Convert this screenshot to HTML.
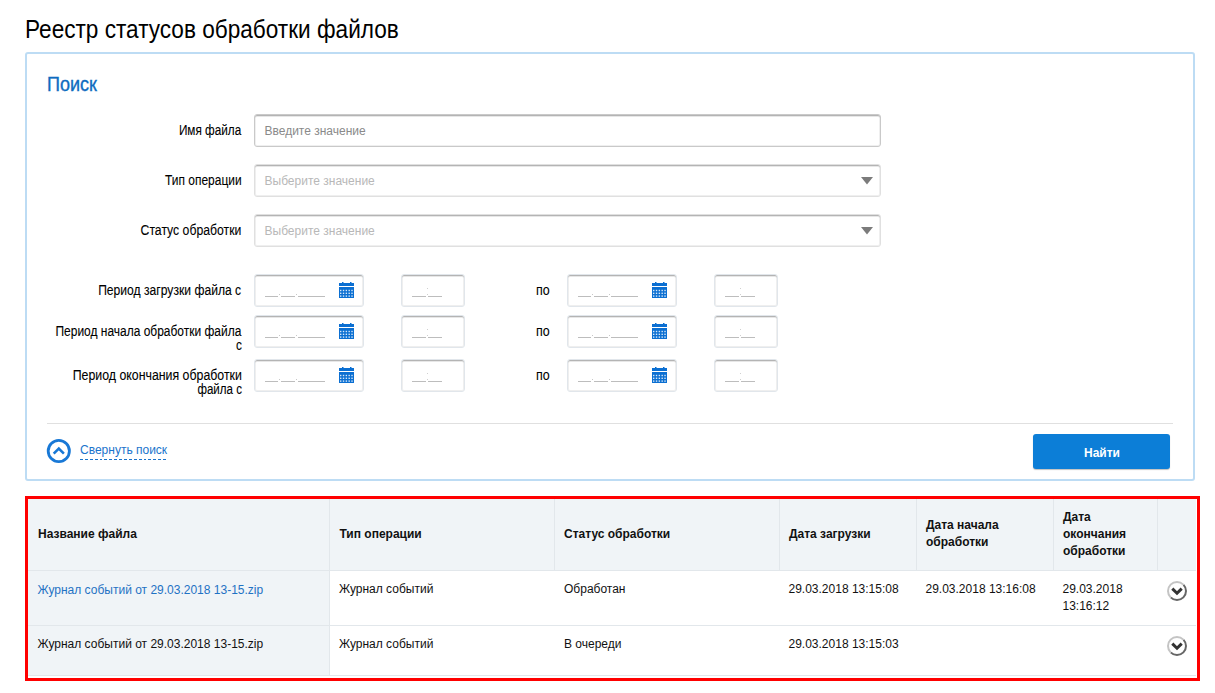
<!DOCTYPE html>
<html><head><meta charset="utf-8"><title>Реестр статусов обработки файлов</title><style>
html,body{margin:0;padding:0}
body{width:1215px;height:693px;overflow:hidden;background:#fff;font-family:"Liberation Sans", sans-serif;position:relative}
.t{position:absolute;white-space:nowrap}
</style></head><body>
<div class="t" style="left:24.5px;top:13.5px;font-size:26px;line-height:30px;color:#000;transform:scaleX(0.869);transform-origin:0 0;">Реестр статусов обработки файлов</div>
<div style="position:absolute;left:25px;top:52px;width:1170px;height:429px;box-sizing:border-box;border:2px solid #bddcf4;border-radius:3px;background:#fff"></div>
<div class="t" style="left:46.5px;top:73px;font-size:20px;line-height:22px;color:#0e6cbf;transform:scaleX(0.9);transform-origin:0 0;-webkit-text-stroke:0.35px #0e6cbf;">Поиск</div>
<div class="t" style="right:973.5px;top:122px;font-size:14px;line-height:16px;color:#000;transform:scaleX(0.84);transform-origin:100% 0;-webkit-text-stroke:0.1px #000;">Имя файла</div>
<div class="t" style="right:973.5px;top:172px;font-size:14px;line-height:16px;color:#000;transform:scaleX(0.854);transform-origin:100% 0;-webkit-text-stroke:0.1px #000;">Тип операции</div>
<div class="t" style="right:973.5px;top:222px;font-size:14px;line-height:16px;color:#000;transform:scaleX(0.874);transform-origin:100% 0;-webkit-text-stroke:0.1px #000;">Статус обработки</div>
<div class="t" style="right:973.5px;top:282px;font-size:14px;line-height:16px;color:#000;transform:scaleX(0.866);transform-origin:100% 0;-webkit-text-stroke:0.1px #000;">Период загрузки файла с</div>
<div class="t" style="right:973.5px;top:323px;font-size:14px;line-height:16px;color:#000;transform:scaleX(0.855);transform-origin:100% 0;-webkit-text-stroke:0.1px #000;">Период начала обработки файла</div>
<div class="t" style="right:973.5px;top:337px;font-size:14px;line-height:16px;color:#000;transform:scaleX(0.85);transform-origin:100% 0;-webkit-text-stroke:0.1px #000;">с</div>
<div class="t" style="right:973.5px;top:367px;font-size:14px;line-height:16px;color:#000;transform:scaleX(0.882);transform-origin:100% 0;-webkit-text-stroke:0.1px #000;">Период окончания обработки</div>
<div class="t" style="right:973.5px;top:381px;font-size:14px;line-height:16px;color:#000;transform:scaleX(0.825);transform-origin:100% 0;-webkit-text-stroke:0.1px #000;">файла с</div>
<div style="position:absolute;left:254px;top:114px;width:627px;height:33px;box-sizing:border-box;background:#fff;border:1px solid #c9c9c9;border-radius:3px;box-shadow:inset 0 1px 0 #b4b4b4,inset 0 0 0 1px #efefef,inset 0 2px 0 #e7e7e7"></div>
<div style="position:absolute;left:254px;top:164px;width:627px;height:33px;box-sizing:border-box;background:#fff;border:1px solid #e0e0e0;border-radius:3px;box-shadow:inset 0 1px 0 #b4b4b4,inset 0 0 0 1px #efefef,inset 0 2px 0 #e7e7e7"></div>
<div style="position:absolute;left:254px;top:214px;width:627px;height:33px;box-sizing:border-box;background:#fff;border:1px solid #e0e0e0;border-radius:3px;box-shadow:inset 0 1px 0 #b4b4b4,inset 0 0 0 1px #efefef,inset 0 2px 0 #e7e7e7"></div>
<div class="t" style="left:264.5px;top:124px;font-size:12px;line-height:14px;color:#8a8a8a;">Введите значение</div>
<div class="t" style="left:264.5px;top:174px;font-size:12px;line-height:14px;color:#b8b8b8;">Выберите значение</div>
<div class="t" style="left:264.5px;top:224px;font-size:12px;line-height:14px;color:#b8b8b8;">Выберите значение</div>
<svg style="position:absolute;left:861px;top:177px" width="12" height="8"><path d="M0 0H12L6 7.5Z" fill="#7b7b7b"/></svg>
<svg style="position:absolute;left:861px;top:227px" width="12" height="8"><path d="M0 0H12L6 7.5Z" fill="#7b7b7b"/></svg>
<div style="position:absolute;left:254px;top:274px;width:110px;height:33px;box-sizing:border-box;background:#fff;border:1px solid #e1e6eb;border-radius:3px;box-shadow:inset 0 1px 0 #b4b4b4,inset 0 0 0 1px #efefef,inset 0 2px 0 #e7e7e7"></div>
<div style="position:absolute;left:401px;top:274px;width:64px;height:33px;box-sizing:border-box;background:#fff;border:1px solid #e1e6eb;border-radius:3px;box-shadow:inset 0 1px 0 #b4b4b4,inset 0 0 0 1px #efefef,inset 0 2px 0 #e7e7e7"></div>
<div style="position:absolute;left:567px;top:274px;width:110px;height:33px;box-sizing:border-box;background:#fff;border:1px solid #e1e6eb;border-radius:3px;box-shadow:inset 0 1px 0 #b4b4b4,inset 0 0 0 1px #efefef,inset 0 2px 0 #e7e7e7"></div>
<div style="position:absolute;left:714px;top:274px;width:64px;height:33px;box-sizing:border-box;background:#fff;border:1px solid #e1e6eb;border-radius:3px;box-shadow:inset 0 1px 0 #b4b4b4,inset 0 0 0 1px #efefef,inset 0 2px 0 #e7e7e7"></div>
<svg style="position:absolute;left:339px;top:282px" width="15" height="16" viewBox="0 0 15 16"><rect x="3" y="0" width="1.5" height="2" fill="#0b6fd2"/><rect x="11" y="0" width="1.5" height="2" fill="#0b6fd2"/><rect x="0" y="1" width="15" height="3" fill="#0b6fd2"/><rect x="0" y="5" width="15" height="11" fill="#0b6fd2"/><rect x="1.00" y="7.80" width="1.4" height="1.4" fill="#d8e8f8"/><rect x="3.83" y="7.80" width="1.4" height="1.4" fill="#d8e8f8"/><rect x="6.66" y="7.80" width="1.4" height="1.4" fill="#d8e8f8"/><rect x="9.49" y="7.80" width="1.4" height="1.4" fill="#d8e8f8"/><rect x="12.32" y="7.80" width="1.4" height="1.4" fill="#d8e8f8"/><rect x="1.00" y="10.60" width="1.4" height="1.4" fill="#d8e8f8"/><rect x="3.83" y="10.60" width="1.4" height="1.4" fill="#d8e8f8"/><rect x="6.66" y="10.60" width="1.4" height="1.4" fill="#d8e8f8"/><rect x="9.49" y="10.60" width="1.4" height="1.4" fill="#d8e8f8"/><rect x="12.32" y="10.60" width="1.4" height="1.4" fill="#d8e8f8"/><rect x="1.00" y="13.40" width="1.4" height="1.4" fill="#d8e8f8"/><rect x="3.83" y="13.40" width="1.4" height="1.4" fill="#d8e8f8"/><rect x="6.66" y="13.40" width="1.4" height="1.4" fill="#d8e8f8"/><rect x="9.49" y="13.40" width="1.4" height="1.4" fill="#d8e8f8"/><rect x="12.32" y="13.40" width="1.4" height="1.4" fill="#d8e8f8"/></svg>
<svg style="position:absolute;left:652px;top:282px" width="15" height="16" viewBox="0 0 15 16"><rect x="3" y="0" width="1.5" height="2" fill="#0b6fd2"/><rect x="11" y="0" width="1.5" height="2" fill="#0b6fd2"/><rect x="0" y="1" width="15" height="3" fill="#0b6fd2"/><rect x="0" y="5" width="15" height="11" fill="#0b6fd2"/><rect x="1.00" y="7.80" width="1.4" height="1.4" fill="#d8e8f8"/><rect x="3.83" y="7.80" width="1.4" height="1.4" fill="#d8e8f8"/><rect x="6.66" y="7.80" width="1.4" height="1.4" fill="#d8e8f8"/><rect x="9.49" y="7.80" width="1.4" height="1.4" fill="#d8e8f8"/><rect x="12.32" y="7.80" width="1.4" height="1.4" fill="#d8e8f8"/><rect x="1.00" y="10.60" width="1.4" height="1.4" fill="#d8e8f8"/><rect x="3.83" y="10.60" width="1.4" height="1.4" fill="#d8e8f8"/><rect x="6.66" y="10.60" width="1.4" height="1.4" fill="#d8e8f8"/><rect x="9.49" y="10.60" width="1.4" height="1.4" fill="#d8e8f8"/><rect x="12.32" y="10.60" width="1.4" height="1.4" fill="#d8e8f8"/><rect x="1.00" y="13.40" width="1.4" height="1.4" fill="#d8e8f8"/><rect x="3.83" y="13.40" width="1.4" height="1.4" fill="#d8e8f8"/><rect x="6.66" y="13.40" width="1.4" height="1.4" fill="#d8e8f8"/><rect x="9.49" y="13.40" width="1.4" height="1.4" fill="#d8e8f8"/><rect x="12.32" y="13.40" width="1.4" height="1.4" fill="#d8e8f8"/></svg>
<div style="position:absolute;left:265px;top:296px;width:13px;height:1px;background:#bdbdbd"></div>
<div style="position:absolute;left:281px;top:296px;width:14px;height:1px;background:#bdbdbd"></div>
<div style="position:absolute;left:298px;top:296px;width:27px;height:1px;background:#bdbdbd"></div>
<div style="position:absolute;left:279px;top:294px;width:1px;height:1px;background:#c8c8c8"></div>
<div style="position:absolute;left:296px;top:294px;width:1px;height:1px;background:#c8c8c8"></div>
<div style="position:absolute;left:578px;top:296px;width:13px;height:1px;background:#bdbdbd"></div>
<div style="position:absolute;left:594px;top:296px;width:14px;height:1px;background:#bdbdbd"></div>
<div style="position:absolute;left:611px;top:296px;width:27px;height:1px;background:#bdbdbd"></div>
<div style="position:absolute;left:592px;top:294px;width:1px;height:1px;background:#c8c8c8"></div>
<div style="position:absolute;left:609px;top:294px;width:1px;height:1px;background:#c8c8c8"></div>
<div style="position:absolute;left:412px;top:296px;width:14px;height:1px;background:#bdbdbd"></div>
<div style="position:absolute;left:428px;top:296px;width:14px;height:1px;background:#bdbdbd"></div>
<div style="position:absolute;left:426.5px;top:294px;width:1px;height:1px;background:#d0d0d0"></div>
<div style="position:absolute;left:426.5px;top:288px;width:1px;height:1px;background:#d0d0d0"></div>
<div style="position:absolute;left:725px;top:296px;width:14px;height:1px;background:#bdbdbd"></div>
<div style="position:absolute;left:741px;top:296px;width:14px;height:1px;background:#bdbdbd"></div>
<div style="position:absolute;left:739.5px;top:294px;width:1px;height:1px;background:#d0d0d0"></div>
<div style="position:absolute;left:739.5px;top:288px;width:1px;height:1px;background:#d0d0d0"></div>
<div class="t" style="left:536px;top:282px;font-size:14px;line-height:16px;color:#000;transform:scaleX(0.89);transform-origin:0 0;-webkit-text-stroke:0.1px #000;">по</div>
<div style="position:absolute;left:254px;top:315px;width:110px;height:33px;box-sizing:border-box;background:#fff;border:1px solid #e1e6eb;border-radius:3px;box-shadow:inset 0 1px 0 #b4b4b4,inset 0 0 0 1px #efefef,inset 0 2px 0 #e7e7e7"></div>
<div style="position:absolute;left:401px;top:315px;width:64px;height:33px;box-sizing:border-box;background:#fff;border:1px solid #e1e6eb;border-radius:3px;box-shadow:inset 0 1px 0 #b4b4b4,inset 0 0 0 1px #efefef,inset 0 2px 0 #e7e7e7"></div>
<div style="position:absolute;left:567px;top:315px;width:110px;height:33px;box-sizing:border-box;background:#fff;border:1px solid #e1e6eb;border-radius:3px;box-shadow:inset 0 1px 0 #b4b4b4,inset 0 0 0 1px #efefef,inset 0 2px 0 #e7e7e7"></div>
<div style="position:absolute;left:714px;top:315px;width:64px;height:33px;box-sizing:border-box;background:#fff;border:1px solid #e1e6eb;border-radius:3px;box-shadow:inset 0 1px 0 #b4b4b4,inset 0 0 0 1px #efefef,inset 0 2px 0 #e7e7e7"></div>
<svg style="position:absolute;left:339px;top:323px" width="15" height="16" viewBox="0 0 15 16"><rect x="3" y="0" width="1.5" height="2" fill="#0b6fd2"/><rect x="11" y="0" width="1.5" height="2" fill="#0b6fd2"/><rect x="0" y="1" width="15" height="3" fill="#0b6fd2"/><rect x="0" y="5" width="15" height="11" fill="#0b6fd2"/><rect x="1.00" y="7.80" width="1.4" height="1.4" fill="#d8e8f8"/><rect x="3.83" y="7.80" width="1.4" height="1.4" fill="#d8e8f8"/><rect x="6.66" y="7.80" width="1.4" height="1.4" fill="#d8e8f8"/><rect x="9.49" y="7.80" width="1.4" height="1.4" fill="#d8e8f8"/><rect x="12.32" y="7.80" width="1.4" height="1.4" fill="#d8e8f8"/><rect x="1.00" y="10.60" width="1.4" height="1.4" fill="#d8e8f8"/><rect x="3.83" y="10.60" width="1.4" height="1.4" fill="#d8e8f8"/><rect x="6.66" y="10.60" width="1.4" height="1.4" fill="#d8e8f8"/><rect x="9.49" y="10.60" width="1.4" height="1.4" fill="#d8e8f8"/><rect x="12.32" y="10.60" width="1.4" height="1.4" fill="#d8e8f8"/><rect x="1.00" y="13.40" width="1.4" height="1.4" fill="#d8e8f8"/><rect x="3.83" y="13.40" width="1.4" height="1.4" fill="#d8e8f8"/><rect x="6.66" y="13.40" width="1.4" height="1.4" fill="#d8e8f8"/><rect x="9.49" y="13.40" width="1.4" height="1.4" fill="#d8e8f8"/><rect x="12.32" y="13.40" width="1.4" height="1.4" fill="#d8e8f8"/></svg>
<svg style="position:absolute;left:652px;top:323px" width="15" height="16" viewBox="0 0 15 16"><rect x="3" y="0" width="1.5" height="2" fill="#0b6fd2"/><rect x="11" y="0" width="1.5" height="2" fill="#0b6fd2"/><rect x="0" y="1" width="15" height="3" fill="#0b6fd2"/><rect x="0" y="5" width="15" height="11" fill="#0b6fd2"/><rect x="1.00" y="7.80" width="1.4" height="1.4" fill="#d8e8f8"/><rect x="3.83" y="7.80" width="1.4" height="1.4" fill="#d8e8f8"/><rect x="6.66" y="7.80" width="1.4" height="1.4" fill="#d8e8f8"/><rect x="9.49" y="7.80" width="1.4" height="1.4" fill="#d8e8f8"/><rect x="12.32" y="7.80" width="1.4" height="1.4" fill="#d8e8f8"/><rect x="1.00" y="10.60" width="1.4" height="1.4" fill="#d8e8f8"/><rect x="3.83" y="10.60" width="1.4" height="1.4" fill="#d8e8f8"/><rect x="6.66" y="10.60" width="1.4" height="1.4" fill="#d8e8f8"/><rect x="9.49" y="10.60" width="1.4" height="1.4" fill="#d8e8f8"/><rect x="12.32" y="10.60" width="1.4" height="1.4" fill="#d8e8f8"/><rect x="1.00" y="13.40" width="1.4" height="1.4" fill="#d8e8f8"/><rect x="3.83" y="13.40" width="1.4" height="1.4" fill="#d8e8f8"/><rect x="6.66" y="13.40" width="1.4" height="1.4" fill="#d8e8f8"/><rect x="9.49" y="13.40" width="1.4" height="1.4" fill="#d8e8f8"/><rect x="12.32" y="13.40" width="1.4" height="1.4" fill="#d8e8f8"/></svg>
<div style="position:absolute;left:265px;top:337px;width:13px;height:1px;background:#bdbdbd"></div>
<div style="position:absolute;left:281px;top:337px;width:14px;height:1px;background:#bdbdbd"></div>
<div style="position:absolute;left:298px;top:337px;width:27px;height:1px;background:#bdbdbd"></div>
<div style="position:absolute;left:279px;top:335px;width:1px;height:1px;background:#c8c8c8"></div>
<div style="position:absolute;left:296px;top:335px;width:1px;height:1px;background:#c8c8c8"></div>
<div style="position:absolute;left:578px;top:337px;width:13px;height:1px;background:#bdbdbd"></div>
<div style="position:absolute;left:594px;top:337px;width:14px;height:1px;background:#bdbdbd"></div>
<div style="position:absolute;left:611px;top:337px;width:27px;height:1px;background:#bdbdbd"></div>
<div style="position:absolute;left:592px;top:335px;width:1px;height:1px;background:#c8c8c8"></div>
<div style="position:absolute;left:609px;top:335px;width:1px;height:1px;background:#c8c8c8"></div>
<div style="position:absolute;left:412px;top:337px;width:14px;height:1px;background:#bdbdbd"></div>
<div style="position:absolute;left:428px;top:337px;width:14px;height:1px;background:#bdbdbd"></div>
<div style="position:absolute;left:426.5px;top:335px;width:1px;height:1px;background:#d0d0d0"></div>
<div style="position:absolute;left:426.5px;top:329px;width:1px;height:1px;background:#d0d0d0"></div>
<div style="position:absolute;left:725px;top:337px;width:14px;height:1px;background:#bdbdbd"></div>
<div style="position:absolute;left:741px;top:337px;width:14px;height:1px;background:#bdbdbd"></div>
<div style="position:absolute;left:739.5px;top:335px;width:1px;height:1px;background:#d0d0d0"></div>
<div style="position:absolute;left:739.5px;top:329px;width:1px;height:1px;background:#d0d0d0"></div>
<div class="t" style="left:536px;top:323px;font-size:14px;line-height:16px;color:#000;transform:scaleX(0.89);transform-origin:0 0;-webkit-text-stroke:0.1px #000;">по</div>
<div style="position:absolute;left:254px;top:359px;width:110px;height:33px;box-sizing:border-box;background:#fff;border:1px solid #e1e6eb;border-radius:3px;box-shadow:inset 0 1px 0 #b4b4b4,inset 0 0 0 1px #efefef,inset 0 2px 0 #e7e7e7"></div>
<div style="position:absolute;left:401px;top:359px;width:64px;height:33px;box-sizing:border-box;background:#fff;border:1px solid #e1e6eb;border-radius:3px;box-shadow:inset 0 1px 0 #b4b4b4,inset 0 0 0 1px #efefef,inset 0 2px 0 #e7e7e7"></div>
<div style="position:absolute;left:567px;top:359px;width:110px;height:33px;box-sizing:border-box;background:#fff;border:1px solid #e1e6eb;border-radius:3px;box-shadow:inset 0 1px 0 #b4b4b4,inset 0 0 0 1px #efefef,inset 0 2px 0 #e7e7e7"></div>
<div style="position:absolute;left:714px;top:359px;width:64px;height:33px;box-sizing:border-box;background:#fff;border:1px solid #e1e6eb;border-radius:3px;box-shadow:inset 0 1px 0 #b4b4b4,inset 0 0 0 1px #efefef,inset 0 2px 0 #e7e7e7"></div>
<svg style="position:absolute;left:339px;top:367px" width="15" height="16" viewBox="0 0 15 16"><rect x="3" y="0" width="1.5" height="2" fill="#0b6fd2"/><rect x="11" y="0" width="1.5" height="2" fill="#0b6fd2"/><rect x="0" y="1" width="15" height="3" fill="#0b6fd2"/><rect x="0" y="5" width="15" height="11" fill="#0b6fd2"/><rect x="1.00" y="7.80" width="1.4" height="1.4" fill="#d8e8f8"/><rect x="3.83" y="7.80" width="1.4" height="1.4" fill="#d8e8f8"/><rect x="6.66" y="7.80" width="1.4" height="1.4" fill="#d8e8f8"/><rect x="9.49" y="7.80" width="1.4" height="1.4" fill="#d8e8f8"/><rect x="12.32" y="7.80" width="1.4" height="1.4" fill="#d8e8f8"/><rect x="1.00" y="10.60" width="1.4" height="1.4" fill="#d8e8f8"/><rect x="3.83" y="10.60" width="1.4" height="1.4" fill="#d8e8f8"/><rect x="6.66" y="10.60" width="1.4" height="1.4" fill="#d8e8f8"/><rect x="9.49" y="10.60" width="1.4" height="1.4" fill="#d8e8f8"/><rect x="12.32" y="10.60" width="1.4" height="1.4" fill="#d8e8f8"/><rect x="1.00" y="13.40" width="1.4" height="1.4" fill="#d8e8f8"/><rect x="3.83" y="13.40" width="1.4" height="1.4" fill="#d8e8f8"/><rect x="6.66" y="13.40" width="1.4" height="1.4" fill="#d8e8f8"/><rect x="9.49" y="13.40" width="1.4" height="1.4" fill="#d8e8f8"/><rect x="12.32" y="13.40" width="1.4" height="1.4" fill="#d8e8f8"/></svg>
<svg style="position:absolute;left:652px;top:367px" width="15" height="16" viewBox="0 0 15 16"><rect x="3" y="0" width="1.5" height="2" fill="#0b6fd2"/><rect x="11" y="0" width="1.5" height="2" fill="#0b6fd2"/><rect x="0" y="1" width="15" height="3" fill="#0b6fd2"/><rect x="0" y="5" width="15" height="11" fill="#0b6fd2"/><rect x="1.00" y="7.80" width="1.4" height="1.4" fill="#d8e8f8"/><rect x="3.83" y="7.80" width="1.4" height="1.4" fill="#d8e8f8"/><rect x="6.66" y="7.80" width="1.4" height="1.4" fill="#d8e8f8"/><rect x="9.49" y="7.80" width="1.4" height="1.4" fill="#d8e8f8"/><rect x="12.32" y="7.80" width="1.4" height="1.4" fill="#d8e8f8"/><rect x="1.00" y="10.60" width="1.4" height="1.4" fill="#d8e8f8"/><rect x="3.83" y="10.60" width="1.4" height="1.4" fill="#d8e8f8"/><rect x="6.66" y="10.60" width="1.4" height="1.4" fill="#d8e8f8"/><rect x="9.49" y="10.60" width="1.4" height="1.4" fill="#d8e8f8"/><rect x="12.32" y="10.60" width="1.4" height="1.4" fill="#d8e8f8"/><rect x="1.00" y="13.40" width="1.4" height="1.4" fill="#d8e8f8"/><rect x="3.83" y="13.40" width="1.4" height="1.4" fill="#d8e8f8"/><rect x="6.66" y="13.40" width="1.4" height="1.4" fill="#d8e8f8"/><rect x="9.49" y="13.40" width="1.4" height="1.4" fill="#d8e8f8"/><rect x="12.32" y="13.40" width="1.4" height="1.4" fill="#d8e8f8"/></svg>
<div style="position:absolute;left:265px;top:381px;width:13px;height:1px;background:#bdbdbd"></div>
<div style="position:absolute;left:281px;top:381px;width:14px;height:1px;background:#bdbdbd"></div>
<div style="position:absolute;left:298px;top:381px;width:27px;height:1px;background:#bdbdbd"></div>
<div style="position:absolute;left:279px;top:379px;width:1px;height:1px;background:#c8c8c8"></div>
<div style="position:absolute;left:296px;top:379px;width:1px;height:1px;background:#c8c8c8"></div>
<div style="position:absolute;left:578px;top:381px;width:13px;height:1px;background:#bdbdbd"></div>
<div style="position:absolute;left:594px;top:381px;width:14px;height:1px;background:#bdbdbd"></div>
<div style="position:absolute;left:611px;top:381px;width:27px;height:1px;background:#bdbdbd"></div>
<div style="position:absolute;left:592px;top:379px;width:1px;height:1px;background:#c8c8c8"></div>
<div style="position:absolute;left:609px;top:379px;width:1px;height:1px;background:#c8c8c8"></div>
<div style="position:absolute;left:412px;top:381px;width:14px;height:1px;background:#bdbdbd"></div>
<div style="position:absolute;left:428px;top:381px;width:14px;height:1px;background:#bdbdbd"></div>
<div style="position:absolute;left:426.5px;top:379px;width:1px;height:1px;background:#d0d0d0"></div>
<div style="position:absolute;left:426.5px;top:373px;width:1px;height:1px;background:#d0d0d0"></div>
<div style="position:absolute;left:725px;top:381px;width:14px;height:1px;background:#bdbdbd"></div>
<div style="position:absolute;left:741px;top:381px;width:14px;height:1px;background:#bdbdbd"></div>
<div style="position:absolute;left:739.5px;top:379px;width:1px;height:1px;background:#d0d0d0"></div>
<div style="position:absolute;left:739.5px;top:373px;width:1px;height:1px;background:#d0d0d0"></div>
<div class="t" style="left:536px;top:367px;font-size:14px;line-height:16px;color:#000;transform:scaleX(0.89);transform-origin:0 0;-webkit-text-stroke:0.1px #000;">по</div>
<div style="position:absolute;left:47px;top:423px;width:1126px;height:1px;box-sizing:border-box;background:#e0e0e0"></div>
<svg style="position:absolute;left:46px;top:438px" width="26" height="26" viewBox="0 0 26 26"><circle cx="12.8" cy="13" r="10.6" fill="none" stroke="#1878d6" stroke-width="2.8"/><path d="M7.7 15.6L12.8 10.6L17.9 15.6" fill="none" stroke="#1878d6" stroke-width="2.6"/></svg>
<div class="t" style="left:80px;top:443px;font-size:12px;line-height:14px;color:#1a74cc;">Свернуть поиск</div>
<div style="position:absolute;left:80px;top:459px;width:88px;height:1px;background:repeating-linear-gradient(90deg,#1a74cc 0 2.9px,transparent 2.9px 4.89px)"></div>
<div style="position:absolute;left:1033px;top:434px;width:137px;height:35px;box-sizing:border-box;background:#0c7ed7;border-radius:3px;box-shadow:0 1px 1px rgba(0,0,0,.25)"></div>
<div class="t" style="left:1084px;top:445px;font-size:13px;line-height:15px;color:#fff;font-weight:bold;transform:scaleX(0.92);transform-origin:0 0;">Найти</div>
<div style="position:absolute;left:25px;top:496px;width:1175px;height:185px;box-sizing:border-box;border:3px solid #ff0000"></div>
<div style="position:absolute;left:28px;top:499px;width:1168px;height:71px;box-sizing:border-box;background:#f0f4f7"></div>
<div style="position:absolute;left:28px;top:570px;width:1168px;height:1px;box-sizing:border-box;background:#e2e7eb"></div>
<div style="position:absolute;left:28px;top:571px;width:301px;height:105px;box-sizing:border-box;background:#f0f4f7"></div>
<div style="position:absolute;left:28px;top:625px;width:1168px;height:1px;box-sizing:border-box;background:#e2e7eb"></div>
<div style="position:absolute;left:28px;top:675px;width:1168px;height:1px;box-sizing:border-box;background:#e2e7eb"></div>
<div style="position:absolute;left:329px;top:499px;width:1px;height:71px;box-sizing:border-box;background:#e2e7eb"></div>
<div style="position:absolute;left:554px;top:499px;width:1px;height:71px;box-sizing:border-box;background:#e2e7eb"></div>
<div style="position:absolute;left:779px;top:499px;width:1px;height:71px;box-sizing:border-box;background:#e2e7eb"></div>
<div style="position:absolute;left:916px;top:499px;width:1px;height:71px;box-sizing:border-box;background:#e2e7eb"></div>
<div style="position:absolute;left:1053px;top:499px;width:1px;height:71px;box-sizing:border-box;background:#e2e7eb"></div>
<div style="position:absolute;left:1157px;top:499px;width:1px;height:71px;box-sizing:border-box;background:#e2e7eb"></div>
<div style="position:absolute;left:329px;top:571px;width:1px;height:105px;box-sizing:border-box;background:#e2e7eb"></div>
<div class="t" style="left:38px;top:527px;font-size:12px;line-height:14px;color:#111;font-weight:bold;">Название файла</div>
<div class="t" style="left:339.5px;top:527px;font-size:12px;line-height:14px;color:#111;font-weight:bold;">Тип операции</div>
<div class="t" style="left:564px;top:527px;font-size:12px;line-height:14px;color:#111;font-weight:bold;">Статус обработки</div>
<div class="t" style="left:789px;top:527px;font-size:12px;line-height:14px;color:#111;font-weight:bold;">Дата загрузки</div>
<div class="t" style="left:926px;top:518px;font-size:12px;line-height:14px;color:#111;font-weight:bold;">Дата начала</div>
<div class="t" style="left:926px;top:535px;font-size:12px;line-height:14px;color:#111;font-weight:bold;">обработки</div>
<div class="t" style="left:1063px;top:510px;font-size:12px;line-height:14px;color:#111;font-weight:bold;">Дата</div>
<div class="t" style="left:1063px;top:527px;font-size:12px;line-height:14px;color:#111;font-weight:bold;">окончания</div>
<div class="t" style="left:1063px;top:544px;font-size:12px;line-height:14px;color:#111;font-weight:bold;">обработки</div>
<div class="t" style="left:37.5px;top:583px;font-size:12px;line-height:14px;color:#1f72c4;">Журнал событий от 29.03.2018 13-15.zip</div>
<div class="t" style="left:339px;top:582px;font-size:12px;line-height:14px;color:#111;">Журнал событий</div>
<div class="t" style="left:564px;top:582px;font-size:12px;line-height:14px;color:#111;">Обработан</div>
<div class="t" style="left:788.5px;top:582px;font-size:12px;line-height:14px;color:#111;">29.03.2018 13:15:08</div>
<div class="t" style="left:925.5px;top:582px;font-size:12px;line-height:14px;color:#111;">29.03.2018 13:16:08</div>
<div class="t" style="left:1062.5px;top:582px;font-size:12px;line-height:14px;color:#111;">29.03.2018</div>
<div class="t" style="left:1062.5px;top:599px;font-size:12px;line-height:14px;color:#111;">13:16:12</div>
<div class="t" style="left:37.5px;top:637px;font-size:12px;line-height:14px;color:#111;">Журнал событий от 29.03.2018 13-15.zip</div>
<div class="t" style="left:339px;top:637px;font-size:12px;line-height:14px;color:#111;">Журнал событий</div>
<div class="t" style="left:564px;top:637px;font-size:12px;line-height:14px;color:#111;">В очереди</div>
<div class="t" style="left:788.5px;top:637px;font-size:12px;line-height:14px;color:#111;">29.03.2018 13:15:03</div>
<svg style="position:absolute;left:1166px;top:580px" width="22" height="22" viewBox="0 0 22 22"><defs><linearGradient id="g591" x1="0" y1="0" x2="1" y2="1"><stop offset="0.5" stop-color="#c4c4c4"/><stop offset="0.53" stop-color="#666"/></linearGradient></defs><circle cx="11" cy="11" r="9" fill="#fff" stroke="url(#g591)" stroke-width="2"/><path d="M6.3 8.6L11 13.2L15.7 8.6" fill="none" stroke="#333" stroke-width="3"/></svg>
<svg style="position:absolute;left:1166px;top:635px" width="22" height="22" viewBox="0 0 22 22"><defs><linearGradient id="g646" x1="0" y1="0" x2="1" y2="1"><stop offset="0.5" stop-color="#c4c4c4"/><stop offset="0.53" stop-color="#666"/></linearGradient></defs><circle cx="11" cy="11" r="9" fill="#fff" stroke="url(#g646)" stroke-width="2"/><path d="M6.3 8.6L11 13.2L15.7 8.6" fill="none" stroke="#333" stroke-width="3"/></svg>
</body></html>
